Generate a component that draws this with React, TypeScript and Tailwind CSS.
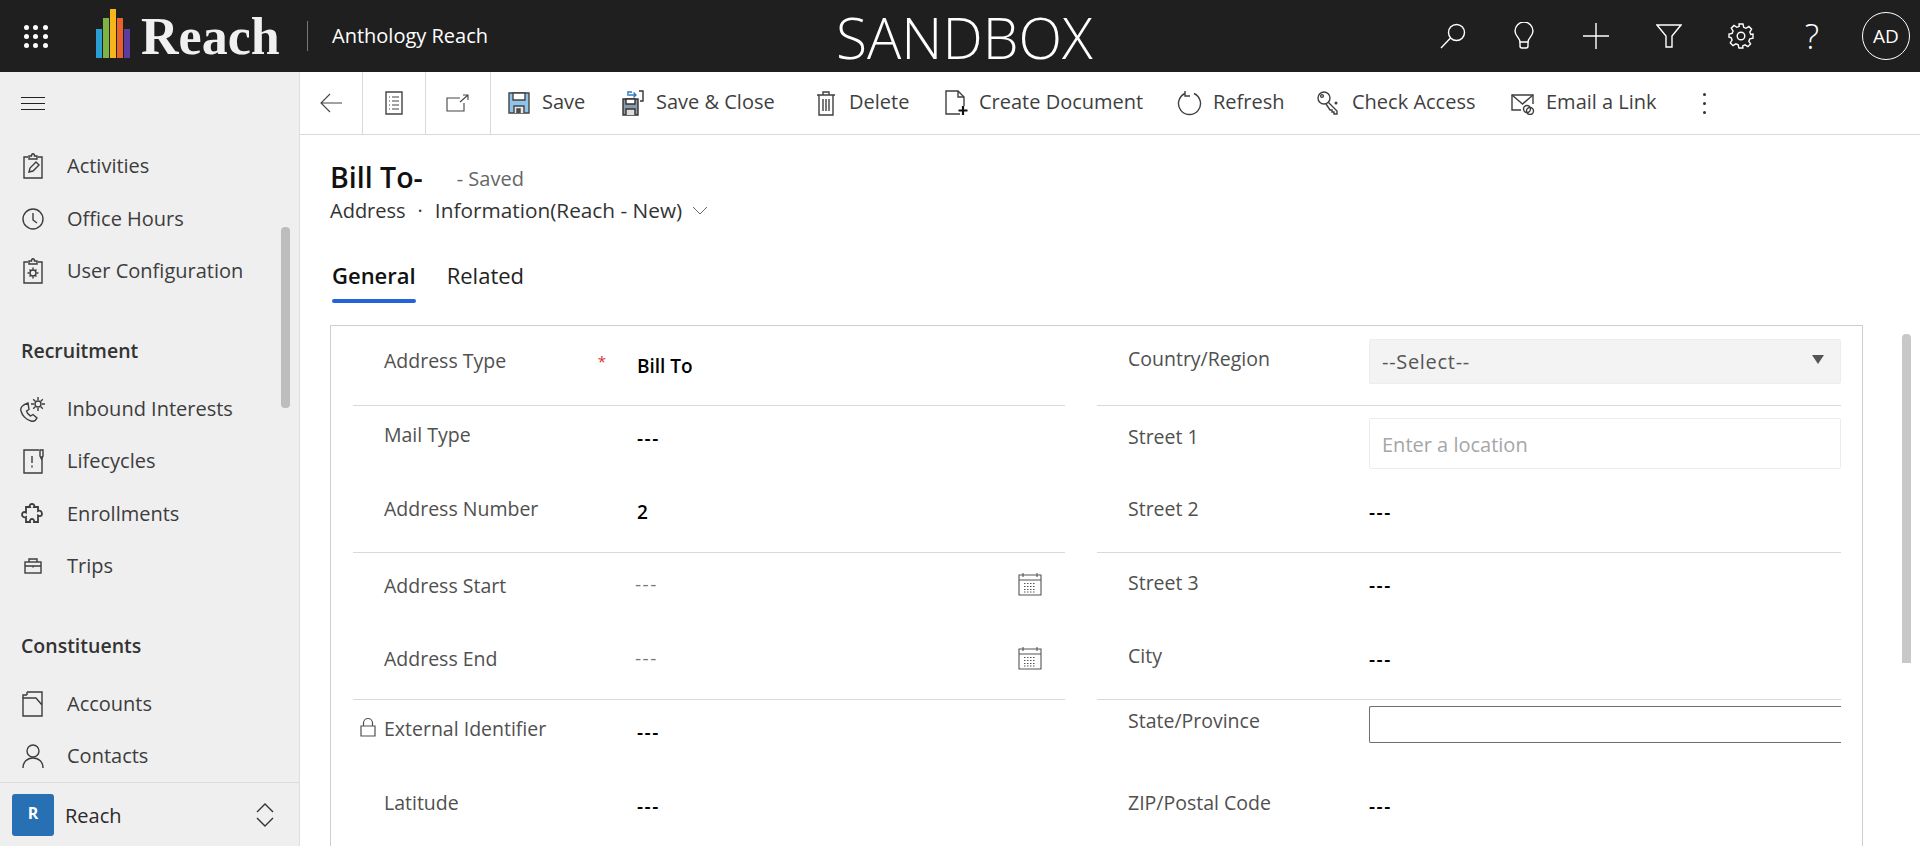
import React from 'react'

const font = "font-['Open_Sans','Noto_Sans',sans-serif]"

function Svg({ w, h, vb, children, className = '' }: { w: number; h: number; vb?: string; children: React.ReactNode; className?: string }) {
  return (
    <svg width={w} height={h} viewBox={vb || `0 0 ${w} ${h}`} fill="none" stroke="currentColor" strokeWidth="1.4" className={`shrink-0 ${className}`}>
      {children}
    </svg>
  )
}

const navIcons: Record<string, React.ReactNode> = {
  activities: (
    <Svg w={24} h={28}>
      <path d="M7 5H3v21h18V5h-4" /><path d="M8 7V4h2.5c0-3 3-3 3 0H16v3z" /><path d="M8 20l1-4 6-6 3 3-6 6z" />
    </Svg>
  ),
  office: (
    <Svg w={24} h={24}>
      <circle cx="12" cy="12" r="10" /><path d="M12 6v7l4 3" />
    </Svg>
  ),
  config: (
    <Svg w={24} h={28}>
      <path d="M7 5H3v21h18V5h-4" /><path d="M8 7V4h2.5c0-3 3-3 3 0H16v3z" /><circle cx="12" cy="16" r="3" /><path d="M12 10.500v2M12 19.500v2M6.500 16h2M15.500 16h2M8.500 12.500l1.300 1.300M14.200 18.200l1.300 1.300M8.500 19.500l1.300-1.300M14.200 13.800l1.300-1.300" />
    </Svg>
  ),
  inbound: (
    <Svg w={26} h={26}>
      <path d="M8 7C2 9 0 12 1 15c1 4 5 9 10 10 3 1 5-1 6-3l-4-3.500-2.500 1.500c-2-1-3.500-3-4-5l2.500-1.500z" /><circle cx="18" cy="8" r="3" /><path d="M18 1v3M18 12v3M11 8h3M22 8h3M13.200 3.200l2 2M20.800 10.800l2 2M13.200 12.800l2-2M20.800 5.200l2-2" />
    </Svg>
  ),
  lifecycles: (
    <Svg w={24} h={26}>
      <path d="M18 2H3v23h18V8" /><path d="M19 2h3v6l-1.500 3L19 8z" /><path d="M11 8v7M11 17.500v2" />
    </Svg>
  ),
  enrollments: (
    <Svg w={26} h={24} className="stroke-[1.8]">
      <path d="M6 5h4c-2-4 6-4 4 0h4v4c4-2 6 6 1 5l-1-.5V20h-4c1-4-5-4-4 0H6v-5c-4 2-6-5-1-5l1 .5z" />
    </Svg>
  ),
  trips: (
    <Svg w={18} h={16}>
      <rect x="1" y="4" width="16" height="11" /><path d="M5 4V1h8v3M1 8h16M9 7.500v2" />
    </Svg>
  ),
  accounts: (
    <Svg w={24} h={26}>
      <path d="M6 1h15v24H2V7h13l6 7" /><path d="M2 7V4h4M6 4V1" />
    </Svg>
  ),
  contacts: (
    <Svg w={24} h={26}>
      <circle cx="12" cy="8" r="6" /><path d="M2 25c0-6 4-10 10-10s10 4 10 10" />
    </Svg>
  ),
}

const toolbarIcons: Record<string, React.ReactNode> = {
  save: (
    <Svg w={22} h={24}>
      <path d="M1 2h20v20H1z" fill="#8fc3ea" stroke="#444" /><path d="M5 2h12v7H5z" fill="#fff" stroke="#444" /><path d="M6 22v-7h10v7" fill="#e8e8e8" stroke="#444" /><path d="M9 22v-4h3v4" fill="#555" stroke="#444" />
    </Svg>
  ),
  saveClose: (
    <Svg w={22} h={26}>
      <path d="M1 9h15v16H1z" fill="#8a9aa8" stroke="#333" /><path d="M4 9h9v5H4z" fill="#fff" stroke="#333" /><path d="M4 25v-6h9v6" fill="#ddd" stroke="#333" />
      <path d="M6 6V2h4M7 5h7M11.500 2.500L14 5l-2.500 2.500" stroke="#2b79c2" /><path d="M17 1h4v10h-3" stroke="#333" />
    </Svg>
  ),
  trash: (
    <Svg w={20} h={26}>
      <path d="M1 5h18M3 5v20h14V5M7 5V2h6v3M7 9v12M10 9v12M13 9v12" />
    </Svg>
  ),
  doc: (
    <Svg w={24} h={26}>
      <path d="M16 24H2V1h12l6 6v9" /><path d="M14 1v6h6" /><path d="M19 16v9M14.500 20.500h9" stroke="#111" strokeWidth="2.200" />
    </Svg>
  ),
  refresh: (
    <Svg w={26} h={26}>
      <path d="M8 3.500a11 11 0 1 0 9 0" /><path d="M8 1v5h5" />
    </Svg>
  ),
  key: (
    <Svg w={26} h={26}>
      <circle cx="8" cy="8" r="6" /><circle cx="6" cy="6" r="1.400" /><path d="M12 12l9 9v3h-3v-2h-2v-2h-2l-4-6" /><circle cx="20" cy="13" r="0.800" />
    </Svg>
  ),
  email: (
    <Svg w={24} h={24}>
      <path d="M10 19H1V4h21v9" /><path d="M1 4l10.500 9L22 4" /><circle cx="16" cy="18" r="3.500" /><circle cx="19" cy="20" r="3.500" />
    </Svg>
  ),
}

function HeaderIcons() {
  return (
    <div className="flex items-center text-white mr-[15px]">
      <div className="w-[71px] flex justify-center">
        <Svg w={28} h={28}>
          <circle cx="17.500" cy="10.500" r="8" /><path d="M11.500 16L2 26" />
        </Svg>
      </div>
      <div className="w-[72px] flex justify-center">
        <Svg w={22} h={28}>
          <path d="M7 20c0-4-5-6-5-11a9 9 0 0 1 18 0c0 5-5 7-5 11z" /><path d="M7 20v4c0 1 1 2 2 2h4c1 0 2-1 2-2v-4" />
        </Svg>
      </div>
      <div className="w-[72px] flex justify-center">
        <Svg w={26} h={26}>
          <path d="M13 0v26M0 13h26" />
        </Svg>
      </div>
      <div className="w-[73px] flex justify-center">
        <Svg w={26} h={24}>
          <path d="M1 1h24l-9 11v11h-6V12z" />
        </Svg>
      </div>
      <div className="w-[72px] flex justify-center">
        <Svg w={26} h={26}>
          <circle cx="13" cy="13" r="3.800" />
          <path d="M11 1h4l.7 3.300 2.300 1 2.900-1.800 2.700 2.700-1.800 2.900 1 2.300L25 11.100v4l-3.200.7-1 2.300 1.800 2.900-2.700 2.700-2.900-1.800-2.300 1L14.900 25h-4l-.7-3.200-2.300-1-2.900 1.800-2.700-2.700L4.100 17l-1-2.300L1 14.100v-3l3.100-.7 1-2.300L3.300 5.200 6 2.500l2.900 1.800 2.300-1z" />
        </Svg>
      </div>
      <div className="w-[70px] flex justify-center text-[34px] font-light leading-none">?</div>
    </div>
  )
}

function NavItem({ icon, label }: { icon: string; label: string }) {
  return (
    <div className="flex items-center h-[52.5px] text-[#3d3d3d]">
      <div className="w-[67px] pr-[1px] flex justify-center">{navIcons[icon]}</div>
      <span className="text-[20px]">{label}</span>
    </div>
  )
}

function NavHeading({ children }: { children: React.ReactNode }) {
  return <div className="h-[58px] mt-[27px] pb-[5px] flex items-center pl-[21px] text-[19.500px] font-semibold text-[#333]">{children}</div>
}

function Sidebar() {
  return (
    <aside className="relative w-[300px] shrink-0 flex flex-col bg-[#efefef] border-r border-[#dedede]">
      <div className="h-[62px] flex items-center pl-[21px]">
        <div className="w-6 flex flex-col gap-[5px]">
          <div className="h-[1px] bg-[#222]" />
          <div className="h-[1px] bg-[#222]" />
          <div className="h-[1px] bg-[#222]" />
        </div>
      </div>
      <div className="flex-1 overflow-hidden pt-[6px]">
        <NavItem icon="activities" label="Activities" />
        <NavItem icon="office" label="Office Hours" />
        <NavItem icon="config" label="User Configuration" />
        <NavHeading>Recruitment</NavHeading>
        <NavItem icon="inbound" label="Inbound Interests" />
        <NavItem icon="lifecycles" label="Lifecycles" />
        <NavItem icon="enrollments" label="Enrollments" />
        <NavItem icon="trips" label="Trips" />
        <NavHeading>Constituents</NavHeading>
        <NavItem icon="accounts" label="Accounts" />
        <NavItem icon="contacts" label="Contacts" />
      </div>
      {/* scrollbar */}
      <div className="absolute left-[281px] top-[155px] w-[9px] h-[181px] rounded bg-[#bdbdbd]" />
      <div className="h-[64px] shrink-0 flex items-center border-t border-[#dcdcdc] pl-[12px] pr-[24px] bg-[#efefef]">
        <div className="w-[42px] h-[42px] rounded-[3px] bg-[#2770b4] text-white flex items-center justify-center pb-[4px] text-[16px] font-bold">R</div>
        <span className="ml-[11px] mt-[3px] text-[20px] text-[#2b2b2b] font-medium">Reach</span>
        <div className="ml-auto text-[#333]">
          <Svg w={20} h={26}>
            <path d="M2 10l8-8 8 8M2 16l8 8 8-8" />
          </Svg>
        </div>
      </div>
    </aside>
  )
}

function ToolButton({ icon, label, textClass }: { icon: string; label: string; textClass: string }) {
  return (
    <div className="flex items-center text-[#3f3f3f]">
      <div className="w-[24px] flex justify-center">{toolbarIcons[icon]}</div>
      <span className={`ml-[11px] pb-[2px] text-[20px] whitespace-nowrap ${textClass}`}>{label}</span>
    </div>
  )
}

function Toolbar() {
  return (
    <div className="h-[63px] shrink-0 flex items-center border-b border-[#d9d9d9] text-[#444]">
      <div className="w-[63px] h-full flex items-center justify-center border-r border-[#d9d9d9]">
        <Svg w={22} h={20}>
          <path d="M22 10H1M10 1l-9 9 9 9" strokeWidth="1.100" />
        </Svg>
      </div>
      <div className="w-[63px] h-full flex items-center justify-center border-r border-[#d9d9d9]">
        <Svg w={18} h={24}>
          <path d="M1 1h16v22H1z" /><path d="M4 6h1M7 6h7M4 10h1M7 10h7M4 14h1M7 14h7M4 18h1M7 18h7" strokeWidth="1" />
        </Svg>
      </div>
      <div className="w-[65px] h-full flex items-center justify-center border-r border-[#d9d9d9]">
        <Svg w={24} h={18}>
          <path d="M14 4H1v13h17V9" strokeWidth="1.100" /><path d="M14 8l8-7M17 1h5v5" strokeWidth="1.100" />
        </Svg>
      </div>
      <div className="flex items-center gap-9 pl-[16px]">
        <ToolButton icon="save" label="Save" textClass="w-[43px]" />
        <ToolButton icon="saveClose" label="Save & Close" textClass="w-[122px]" />
        <ToolButton icon="trash" label="Delete" textClass="w-[59px]" />
        <ToolButton icon="doc" label="Create Document" textClass="w-[163px]" />
        <ToolButton icon="refresh" label="Refresh" textClass="w-[68px]" />
        <ToolButton icon="key" label="Check Access" textClass="w-[123px]" />
        <ToolButton icon="email" label="Email a Link" textClass="w-[109px]" />
      </div>
      <div className="ml-[48px] flex flex-col gap-[6px]">
        <div className="w-[3px] h-[3px] rounded-full bg-[#333]" />
        <div className="w-[3px] h-[3px] rounded-full bg-[#333]" />
        <div className="w-[3px] h-[3px] rounded-full bg-[#333]" />
      </div>
    </div>
  )
}

function Calendar() {
  return (
    <Svg w={24} h={24} className="text-[#555]">
      <path d="M1 3h22v20H1zM1 8h22M5 1v4M19 1v4" strokeWidth="1.100" />
      <path d="M6 11.500h12M6 14.500h12M6 17.500h12M6 20h12" strokeWidth="1.200" strokeDasharray="1.500 1.500" />
    </Svg>
  )
}

function Row({ label, labelPad, width, children }: { label: React.ReactNode; labelPad: string; width: string; children: React.ReactNode }) {
  return (
    <div className="flex h-[73.5px]">
      <div className={`${width} shrink-0 pl-[31px] text-[19.500px] leading-6 text-[#505050] ${labelPad}`}>{label}</div>
      <div className="flex-1 min-w-0">{children}</div>
    </div>
  )
}

function Value({ children, pad = 'pt-[20px]' }: { children: React.ReactNode; pad?: string }) {
  return <div className={`text-[19px] leading-6 font-semibold text-black ${pad}`}>{children}</div>
}

function Empty() {
  return <Value><span className="tracking-[1.500px]">---</span></Value>
}

function DateValue() {
  return (
    <div className="flex items-start justify-between pr-[23px] pt-[19px]">
      <span className="text-[19px] leading-6 text-[#777] tracking-[1.500px] -ml-[2px]">---</span>
      <Calendar />
    </div>
  )
}

function FormCard() {
  const lw = 'w-[284px]'
  const rw = 'w-[272px]'
  return (
    <div className="mx-[30px] border border-[#cfcfcf] border-b-0 px-[22px] flex gap-8 w-[1533px] h-[600px]">
      {/* left column */}
      <div className="w-[712px] shrink-0">
        <div className="h-[80px] border-b border-[#d9d9d9]">
          <Row
            width={lw}
            labelPad="pt-[23px]"
            label={
              <div className="flex justify-between pr-[31px]">
                <span>Address Type</span>
                <span className="text-[#d13438] text-[15px]">*</span>
              </div>
            }
          >
            <Value pad="pt-[28px]">Bill To</Value>
          </Row>
        </div>
        <div className="h-[147px] border-b border-[#d9d9d9]">
          <Row width={lw} labelPad="pt-[17px]" label="Mail Type"><Empty /></Row>
          <Row width={lw} labelPad="pt-[17px]" label="Address Number"><Value>2</Value></Row>
        </div>
        <div className="h-[147px] border-b border-[#d9d9d9]">
          <Row width={lw} labelPad="pt-[21px]" label="Address Start"><DateValue /></Row>
          <Row width={lw} labelPad="pt-[20px]" label="Address End"><DateValue /></Row>
        </div>
        <div>
          <Row
            width={lw}
            labelPad="pt-[17px]"
            label={
              <div className="flex">
                <div className="w-[24px] -ml-[24px]">
                  <Svg w={16} h={20}>
                    <path d="M1 9h14v10H1zM3.500 9V6a4.500 4.500 0 0 1 9 0v3" strokeWidth="1.200" />
                  </Svg>
                </div>
                External Identifier
              </div>
            }
          >
            <Empty />
          </Row>
          <Row width={lw} labelPad="pt-[17px]" label="Latitude"><Empty /></Row>
        </div>
      </div>

      {/* right column */}
      <div className="w-[744px] shrink-0">
        <div className="h-[80px] border-b border-[#d9d9d9]">
          <Row width={rw} labelPad="pt-[21px]" label="Country/Region">
            <div className="mt-[13px] h-[45px] bg-[#f3f3f3] border border-[#ededed] rounded-[2px] flex items-center justify-between pl-[12px] pr-[16px] text-[20px] text-[#555]">
              <span className="tracking-[0.700px]">--Select--</span>
              <span className="w-0 h-0 mb-1 border-l-[6px] border-r-[6px] border-t-[9px] border-l-transparent border-r-transparent border-t-[#555]" />
            </div>
          </Row>
        </div>
        <div className="h-[147px] border-b border-[#d9d9d9]">
          <Row width={rw} labelPad="pt-[19px]" label="Street 1">
            <div className="mt-[12px] h-[51px] border border-[#ececec] rounded-[2px] flex items-center pl-[12px] pt-[3px] text-[20px] text-[#a6a6a6]">Enter a location</div>
          </Row>
          <Row width={rw} labelPad="pt-[17px]" label="Street 2"><Empty /></Row>
        </div>
        <div className="h-[147px] border-b border-[#d9d9d9]">
          <Row width={rw} labelPad="pt-[18px]" label="Street 3"><Empty /></Row>
          <Row width={rw} labelPad="pt-[17px]" label="City"><Empty /></Row>
        </div>
        <div>
          <Row width={rw} labelPad="pt-[9px]" label="State/Province">
            <div className="mt-[6px] h-[37px] border border-r-0 border-[#6f6f6f] rounded-l-[2px] bg-white" />
          </Row>
          <Row width={rw} labelPad="pt-[17px]" label="ZIP/Postal Code"><Empty /></Row>
        </div>
      </div>
    </div>
  )
}

export default function App() {
  return (
    <div className={`h-screen w-full overflow-hidden flex flex-col bg-white ${font}`}>
      {/* top bar */}
      <header className="relative h-[72px] shrink-0 bg-[#1f1f1f] flex items-center text-white">
        <div className="w-[96px] pl-[24px] shrink-0">
          <div className="grid grid-cols-3 w-[24px] gap-[4px]">
            {[0, 1, 2, 3, 4, 5, 6, 7, 8].map((i) => (
              <div key={i} className="w-[5px] h-[5px] rounded-full bg-white" />
            ))}
          </div>
        </div>
        <div className="flex items-end h-[49px] gap-[1px] mb-[5px] w-[45px] shrink-0">
          <div className="w-[6px] h-[29px] bg-[#2a9fd6]" />
          <div className="w-[6px] h-[40px] bg-[#7cb342]" />
          <div className="w-[6px] h-[49px] bg-[#f5b51b]" />
          <div className="w-[6px] h-[40px] bg-[#e8622c]" />
          <div className="w-[6px] h-[29px] bg-[#5c3d9e]" />
        </div>
        <span className="font-['Liberation_Serif',serif] font-bold text-[52px] leading-none text-[#f0f0f0] mt-[2px] w-[166px] shrink-0">Reach</span>
        <div className="w-[1px] h-[30px] bg-[#777] shrink-0" />
        <span className="ml-[24px] text-[20px] font-normal">Anthology Reach</span>
        <div className="absolute left-[836px] top-[5px] text-[57px] leading-[64px] font-light">SANDBOX</div>
        <div className="ml-auto flex items-center pr-[8px]">
          <HeaderIcons />
          <div className="w-[48px] h-[48px] rounded-full border border-white flex items-center justify-center text-[19px] mr-[2px]">AD</div>
        </div>
      </header>

      <div className="flex-1 flex min-h-0">
        <Sidebar />
        <main className="relative flex-1 min-w-0 flex flex-col">
          <Toolbar />
          <div className="pt-[24px]">
            <div className="pl-[30px] flex items-baseline">
              <span className="text-[28.500px] leading-[36px] font-semibold text-[#111]">Bill To-</span>
              <span className="ml-[34px] text-[20px] text-[#666] -translate-y-[2px]">- Saved</span>
            </div>
            <div className="pl-[30px] flex items-center h-[30px] text-[20px] text-[#333]">
              <span>Address</span>
              <span className="mx-[12px]">·</span>
              <span className="font-medium text-[20.800px]">Information(Reach - New)</span>
              <Svg w={16} h={10} className="ml-[10px] text-[#666]">
                <path d="M1 1l7 7 7-7" strokeWidth="1" />
              </Svg>
            </div>
            <div className="pl-[32px] pt-[30px] flex gap-[31px] text-[22px] text-[#222]">
              <div>
                <div className="font-semibold leading-[38px] text-[#111]">General</div>
                <div className="h-[4px] rounded bg-[#2563db] mt-[5px]" />
              </div>
              <div className="leading-[38px]">Related</div>
            </div>
            <div className="mt-[22px]">
              <FormCard />
            </div>
          </div>
          {/* page scrollbar */}
          <div className="absolute left-[1602px] top-[262px] w-[9px] h-[329px] rounded-t bg-[#c8c8c8]" />
        </main>
      </div>
    </div>
  )
}
